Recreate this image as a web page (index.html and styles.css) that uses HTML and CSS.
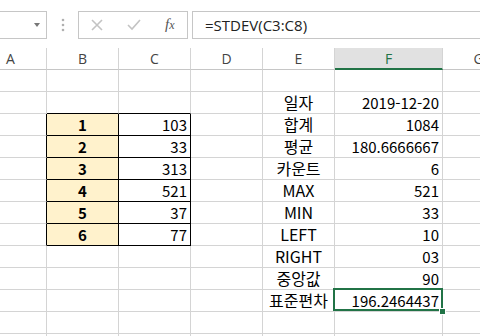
FILE: index.html
```html
<!DOCTYPE html>
<html lang="ko">
  <head>
    <meta charset="UTF-8" />
    <meta name="viewport" content="width=device-width, initial-scale=1.0" />
    <title>STDEV</title>
    <link rel="stylesheet" href="styles.css">
  </head>
  <body>
    <div class="toolbar">
      <div class="name-box"><span class="caret"></span></div>
      <div class="grip">
        <svg width="4" height="14" viewBox="0 0 4 14"><circle cx="2" cy="2" r="1.3"/><circle cx="2" cy="7" r="1.3"/><circle cx="2" cy="12" r="1.3"/></svg>
      </div>
      <div class="fx-box">
        <svg class="btn" width="12" height="12" viewBox="0 0 12 12"><path d="M1 1 L11 11 M11 1 L1 11"/></svg>
        <svg class="btn" width="14" height="12" viewBox="0 0 14 12"><path d="M1 6 L5 10 L13 1"/></svg>
        <span class="fx">f<sub>x</sub></span>
      </div>
      <div class="formula">=STDEV(C3:C8)</div>
    </div>

    <div class="sheet">
      <div class="col-head">A</div>
      <div class="col-head">B</div>
      <div class="col-head">C</div>
      <div class="col-head">D</div>
      <div class="col-head">E</div>
      <div class="col-head active">F</div>
      <div class="col-head">G</div>

      <!-- row 1 -->
      <div class="cell"></div><div class="cell"></div><div class="cell"></div><div class="cell"></div><div class="cell"></div><div class="cell"></div><div class="cell"></div>
      <!-- row 2 -->
      <div class="cell"></div><div class="cell box-top"></div><div class="cell box-top"></div><div class="cell"></div>
      <div class="cell label">일자</div><div class="cell num">2019-12-20</div><div class="cell"></div>
      <!-- row 3 -->
      <div class="cell box-left"></div><div class="cell key">1</div><div class="cell val">103</div><div class="cell"></div>
      <div class="cell label">합계</div><div class="cell num">1084</div><div class="cell"></div>
      <!-- row 4 -->
      <div class="cell box-left"></div><div class="cell key">2</div><div class="cell val">33</div><div class="cell"></div>
      <div class="cell label">평균</div><div class="cell num">180.6666667</div><div class="cell"></div>
      <!-- row 5 -->
      <div class="cell box-left"></div><div class="cell key">3</div><div class="cell val">313</div><div class="cell"></div>
      <div class="cell label">카운트</div><div class="cell num">6</div><div class="cell"></div>
      <!-- row 6 -->
      <div class="cell box-left"></div><div class="cell key">4</div><div class="cell val">521</div><div class="cell"></div>
      <div class="cell label">MAX</div><div class="cell num">521</div><div class="cell"></div>
      <!-- row 7 -->
      <div class="cell box-left"></div><div class="cell key">5</div><div class="cell val">37</div><div class="cell"></div>
      <div class="cell label">MIN</div><div class="cell num">33</div><div class="cell"></div>
      <!-- row 8 -->
      <div class="cell box-left"></div><div class="cell key">6</div><div class="cell val">77</div><div class="cell"></div>
      <div class="cell label">LEFT</div><div class="cell num">10</div><div class="cell"></div>
      <!-- row 9 -->
      <div class="cell"></div><div class="cell"></div><div class="cell"></div><div class="cell"></div>
      <div class="cell label">RIGHT</div><div class="cell num">03</div><div class="cell"></div>
      <!-- row 10 -->
      <div class="cell"></div><div class="cell"></div><div class="cell"></div><div class="cell"></div>
      <div class="cell label">중앙값</div><div class="cell num">90</div><div class="cell"></div>
      <!-- row 11 -->
      <div class="cell"></div><div class="cell"></div><div class="cell"></div><div class="cell"></div>
      <div class="cell label">표준편차</div><div class="cell num selected">196.2464437</div><div class="cell"></div>
      <!-- row 12 -->
      <div class="cell"></div><div class="cell"></div><div class="cell"></div><div class="cell"></div><div class="cell"></div><div class="cell"></div><div class="cell"></div>
      <!-- row 13 -->
      <div class="cell"></div><div class="cell"></div><div class="cell"></div><div class="cell"></div><div class="cell"></div><div class="cell"></div><div class="cell"></div>
    </div>
  </body>
</html>
```

FILE: styles.css
```css
html, body {
  margin: 0;
  padding: 0;
  background: #fff;
  overflow: hidden;
}
body {
  font-family: 'Noto Sans CJK KR', 'Noto Sans', sans-serif;
  color: #000;
}

/* formula bar */
.toolbar {
  display: flex;
  align-items: center;
  height: 48px;
  padding-top: 1px;
  box-sizing: border-box;
}
.name-box {
  position: relative;
  width: 48px;
  height: 28px;
  margin-left: -1px;
  border: 1px solid #c6c6c6;
  box-sizing: border-box;
}
.name-box .caret {
  position: absolute;
  right: 6px;
  top: 11px;
  border-left: 3.5px solid transparent;
  border-right: 3.5px solid transparent;
  border-top: 4px solid #777;
}
.grip {
  width: 31px;
  display: flex;
  justify-content: center;
  fill: #b0b0b0;
}
.fx-box {
  width: 110px;
  height: 28px;
  border: 1px solid #c6c6c6;
  box-sizing: border-box;
  display: flex;
  align-items: center;
  padding-left: 12px;
  gap: 24px;
}
.fx-box .btn {
  fill: none;
  stroke: #c3c3c3;
  stroke-width: 1.6;
}
.fx-box .fx {
  font-family: 'Liberation Serif', serif;
  font-style: italic;
  font-size: 15px;
  color: #555;
}
.fx-box .fx sub {
  font-size: 12px;
  vertical-align: 0;
}
.formula {
  flex: 1;
  height: 28px;
  margin-left: 4px;
  margin-right: -2px;
  border: 1px solid #c6c6c6;
  box-sizing: border-box;
  padding-left: 12px;
  font-family: 'Open Sans', sans-serif;
  font-size: 15px;
  line-height: 26px;
  color: #222;
  white-space: nowrap;
}

/* sheet grid */
.sheet {
  display: grid;
  grid-template-columns: 72px 72px 72px 72px 72px 108px 72px;
  grid-auto-rows: 22px;
  margin-left: -25px;
}
.col-head {
  border-right: 1px solid #d4d4d4;
  border-bottom: 1px solid #c6c6c6;
  box-sizing: border-box;
  text-align: center;
  font-family: 'Open Sans', sans-serif;
  font-size: 14px;
  line-height: 21px;
  color: #444;
}
.col-head.active {
  background: #e1e1e1;
  border-bottom: 2px solid #217346;
  color: #217346;
}
.cell {
  position: relative;
  border-right: 1px solid #d4d4d4;
  border-bottom: 1px solid #d4d4d4;
  box-sizing: border-box;
  font-size: 15px;
  line-height: 21px;
  white-space: nowrap;
  padding: 0 3px;
}
.label {
  text-align: center;
  font-size: 16px;
}
.num, .val {
  text-align: right;
}

/* bordered lookup table */
.box-top {
  border-bottom-color: #000;
}
.box-left {
  border-right-color: #000;
}
.key, .val {
  border-right-color: #000;
  border-bottom-color: #000;
}
.key {
  background: #fff2cc;
  text-align: center;
  font-weight: bold;
}

/* active cell */
.selected::after {
  content: '';
  position: absolute;
  top: -2px;
  left: -2px;
  right: -1px;
  bottom: 0;
  border: 2px solid #217346;
}
.selected::before {
  content: '';
  position: absolute;
  right: -4px;
  bottom: -4px;
  width: 5px;
  height: 5px;
  background: #217346;
  border: 1px solid #fff;
  z-index: 1;
}
```
